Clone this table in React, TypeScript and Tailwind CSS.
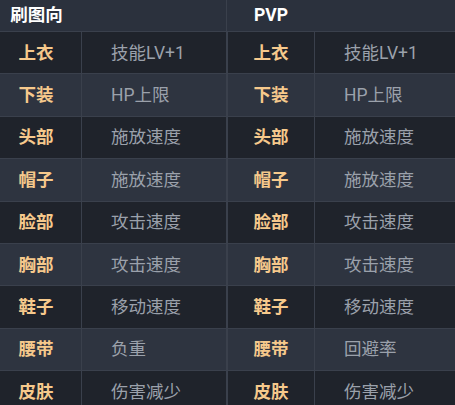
import React from "react";

const left = [
  ["上衣", "技能LV+1"],
  ["下装", "HP上限"],
  ["头部", "施放速度"],
  ["帽子", "施放速度"],
  ["脸部", "攻击速度"],
  ["胸部", "攻击速度"],
  ["鞋子", "移动速度"],
  ["腰带", "负重"],
  ["皮肤", "伤害减少"],
];

const right = [
  ["上衣", "技能LV+1"],
  ["下装", "HP上限"],
  ["头部", "施放速度"],
  ["帽子", "施放速度"],
  ["脸部", "攻击速度"],
  ["胸部", "攻击速度"],
  ["鞋子", "移动速度"],
  ["腰带", "回避率"],
  ["皮肤", "伤害减少"],
];

function Half({ title, rows, first }: { title: string; rows: string[][]; first: boolean }) {
  return (
    <div className={first ? "w-[227px] border-r border-[#3a404c]" : "flex-1"}>
      <div className="h-[32px] flex items-center bg-[#2b313d] border-b border-[#3a404c]">
        <div className={first ? "w-[82px] pr-[9px] text-center" : "w-[88px] text-center"}>
          <span className="text-white font-bold text-[17.5px]">{title}</span>
        </div>
      </div>
      {rows.map(([k, v], i) => (
        <div
          key={i}
          className={
            "h-[42.4px] flex border-b border-[#3a404c] " +
            (i % 2 === 0 ? "bg-[#1f232b]" : "bg-[#2e3440]")
          }
        >
          <div
            className={
              (first ? "w-[82px] pr-[9px]" : "w-[88px] border-l border-[#3a404c]") +
              " flex items-center justify-center border-r border-[#3a404c] text-[#f6c98c] font-bold text-[17.5px]"
            }
          >
            {k}
          </div>
          <div className="flex-1 flex items-center pl-[29px] text-[#9ba1ab] text-[17.5px]">{v}</div>
        </div>
      ))}
    </div>
  );
}

export default function App() {
  return (
    <div
      className="w-[455px] h-[405px] overflow-hidden flex bg-[#1f232b]"
      style={{ fontFamily: 'Roboto, "Noto Sans CJK SC", sans-serif' }}
    >
      <Half title="刷图向" rows={left} first />
      <Half title="PVP" rows={right} first={false} />
    </div>
  );
}
